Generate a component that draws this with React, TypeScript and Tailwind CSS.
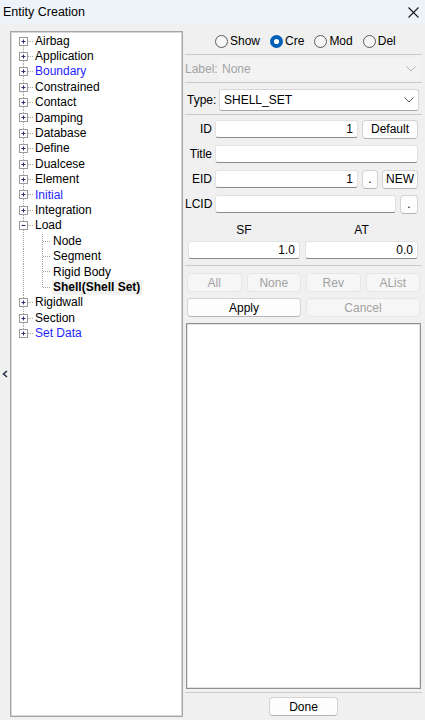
import React from "react";

type Item = {
  label: string;
  level: 0 | 1;
  blue?: boolean;
  expanded?: boolean;
  selected?: boolean;
  first?: boolean;
  last?: boolean;
};

const items: Item[] = [
  { label: "Airbag", level: 0, first: true },
  { label: "Application", level: 0 },
  { label: "Boundary", level: 0, blue: true },
  { label: "Constrained", level: 0 },
  { label: "Contact", level: 0 },
  { label: "Damping", level: 0 },
  { label: "Database", level: 0 },
  { label: "Define", level: 0 },
  { label: "Dualcese", level: 0 },
  { label: "Element", level: 0 },
  { label: "Initial", level: 0, blue: true },
  { label: "Integration", level: 0 },
  { label: "Load", level: 0, expanded: true },
  { label: "Node", level: 1, first: true },
  { label: "Segment", level: 1 },
  { label: "Rigid Body", level: 1 },
  { label: "Shell(Shell Set)", level: 1, selected: true, last: true },
  { label: "Rigidwall", level: 0 },
  { label: "Section", level: 0 },
  { label: "Set Data", level: 0, blue: true, last: true },
];

const H = 15.4;
const MID = 7.5;
const DOT = "#a3a3a3";

function RowLines({ it }: { it: Item }) {
  if (it.level === 0) {
    const y1 = it.first ? MID : 0;
    const y2 = it.last ? MID : H;
    return (
      <svg width="24" height={H} viewBox={`0 0 24 ${H}`} className="shrink-0">
        <line x1="12.5" y1={y1} x2="12.5" y2={y2} stroke={DOT} strokeDasharray="1 1" />
        <line x1="17" y1={MID} x2="23" y2={MID} stroke={DOT} strokeDasharray="1 1" />
        <rect x="8.5" y="3.5" width="8" height="8" fill="#fff" stroke="#9b9b9b" />
        <line x1="10.5" y1={MID} x2="14.5" y2={MID} stroke="#2d2d6e" />
        {!it.expanded && <line x1="12.5" y1="5.5" x2="12.5" y2="9.5" stroke="#2d2d6e" />}
      </svg>
    );
  }
  const y2 = it.last ? MID : H;
  return (
    <svg width="42" height={H} viewBox={`0 0 42 ${H}`} className="shrink-0">
      <line x1="12.5" y1="0" x2="12.5" y2={H} stroke={DOT} strokeDasharray="1 1" />
      <line x1="31.5" y1="0" x2="31.5" y2={y2} stroke={DOT} strokeDasharray="1 1" />
      <line x1="32" y1={MID} x2="40" y2={MID} stroke={DOT} strokeDasharray="1 1" />
    </svg>
  );
}

function Chevron({ color }: { color: string }) {
  return (
    <svg width="10" height="6" viewBox="0 0 10 6">
      <polyline points="0.5,0.5 5,5 9.5,0.5" fill="none" stroke={color} strokeWidth="1" />
    </svg>
  );
}

function Radio({ checked, label }: { checked?: boolean; label: string }) {
  return (
    <div className="flex items-center gap-[2px]">
      {checked ? (
        <svg width="13" height="13" viewBox="0 0 13 13">
          <circle cx="6.5" cy="6.5" r="6.5" fill="#005fb8" />
          <circle cx="6.5" cy="6.5" r="2.6" fill="#fff" />
        </svg>
      ) : (
        <svg width="13" height="13" viewBox="0 0 13 13">
          <circle cx="6.5" cy="6.5" r="6" fill="#f7f7f7" stroke="#5a5a5a" strokeWidth="1" />
        </svg>
      )}
      <span>{label}</span>
    </div>
  );
}

function Input({ value, w }: { value?: string; w: string }) {
  return (
    <div
      className={`${w} h-[18px] bg-white border border-[#e2e2e2] border-b-[#8a8a8a] rounded-[3px] flex items-center justify-end pr-[4px] text-[12px] text-black`}
    >
      {value}
    </div>
  );
}

function Btn({ label, w, disabled }: { label: string; w?: string; disabled?: boolean }) {
  return (
    <div
      className={`${w ?? ""} h-[19px] rounded-[4px] border flex items-center justify-center text-[12px] ${
        disabled
          ? "bg-[#f6f6f6] border-[#e6e6e6] text-[#a2a2a2]"
          : "bg-[#fdfdfd] border-[#d3d3d3] border-b-[#b5b5b5] text-black"
      }`}
    >
      {label}
    </div>
  );
}

function Sep() {
  return <div className="h-px w-full bg-[#c9c9c9] shrink-0" />;
}

export default function App() {
  return (
    <div className="w-[425px] h-[720px] bg-[#f0f0f0] overflow-hidden font-['Liberation_Sans',Arial,sans-serif] text-[12px] text-black">
      {/* Title bar */}
      <div className="h-[24px] bg-[#eef3f9] flex items-center justify-between pl-[3px] pr-[6px]">
        <span className="text-[12.5px] leading-none">Entity Creation</span>
        <svg width="11" height="11" viewBox="0 0 11 11">
          <line x1="0.5" y1="0.5" x2="10.5" y2="10.5" stroke="#1a1a1a" strokeWidth="1.1" />
          <line x1="10.5" y1="0.5" x2="0.5" y2="10.5" stroke="#1a1a1a" strokeWidth="1.1" />
        </svg>
      </div>

      <div className="flex h-[696px]">
        {/* collapse arrow strip */}
        <div className="w-[10px] flex items-center justify-center pt-[4px]">
          <svg width="6" height="8" viewBox="0 0 6 8">
            <polyline points="5,1 1.5,4 5,7" fill="none" stroke="#2a2f4a" strokeWidth="1.6" />
          </svg>
        </div>

        {/* Tree */}
        <div className="mt-[7px] w-[173px] h-[686px] bg-white border border-[#a3a5ab] shadow-[inset_0_0_0_1px_#d6d7da] pt-[1.5px]">
          {items.map((it, i) => (
            <div key={i} className="flex items-center" style={{ height: H }}>
              <RowLines it={it} />
              <span
                className={`leading-[15px] whitespace-nowrap ${
                  it.blue ? "text-[#1f1fff]" : "text-black"
                } ${it.selected ? "font-bold bg-[#f1f1f1] -ml-[1px] pl-[1px] pr-[2px]" : ""}`}
              >
                {it.label}
              </span>
            </div>
          ))}
        </div>

        {/* Right panel */}
        <div className="ml-[2px] w-[237px] flex flex-col">
          {/* radios */}
          <div className="h-[30px] pt-[8px] shrink-0">
            <div className="h-[18px] flex items-center gap-[10px] pl-[30px]">
              <Radio label="Show" />
              <Radio checked label="Cre" />
              <Radio label="Mod" />
              <Radio label="Del" />
            </div>
          </div>
          <Sep />
          {/* Label */}
          <div className="h-[27px] flex items-center shrink-0">
            <span className="w-[34px] text-[#a3a3a3]">Label:</span>
            <div className="w-[201px] h-[22px] flex items-center justify-between pl-[3px] pr-[4px] bg-[#f3f3f3] rounded-[3px]">
              <span className="text-[#a3a3a3]">None</span>
              <Chevron color="#b5b5b5" />
            </div>
          </div>
          <Sep />
          {/* Type */}
          <div className="h-[31px] pt-[6px] flex items-start shrink-0">
            <span className="w-[34px] pl-[2px] h-[22px] flex items-center">Type:</span>
            <div className="w-[200px] h-[22px] flex items-center justify-between pl-[4px] pr-[4px] bg-white border border-[#d6d6d6] border-b-[#a9a9a9] rounded-[3px]">
              <span>SHELL_SET</span>
              <Chevron color="#606060" />
            </div>
          </div>
          <Sep />

          {/* fields */}
          <div className="flex flex-col gap-[7px] mt-[5px] pr-[4px] shrink-0">
            <div className="flex items-center h-[18px]">
              <span className="w-[27px] text-right">ID</span>
              <div className="ml-[3px]">
                <Input w="w-[143px]" value="1" />
              </div>
              <div className="ml-[4px]">
                <Btn label="Default" w="w-[56px]" />
              </div>
            </div>
            <div className="flex items-center h-[18px]">
              <span className="w-[27px] text-right">Title</span>
              <div className="ml-[3px]">
                <Input w="w-[203px]" />
              </div>
            </div>
            <div className="flex items-center h-[18px]">
              <span className="w-[27px] text-right">EID</span>
              <div className="ml-[3px]">
                <Input w="w-[143px]" value="1" />
              </div>
              <div className="ml-[4px]">
                <Btn label="." w="w-[16px]" />
              </div>
              <div className="ml-[4px]">
                <Btn label="NEW" w="w-[36px]" />
              </div>
            </div>
            <div className="flex items-center h-[18px]">
              <span className="w-[27px] text-right">LCID</span>
              <div className="ml-[3px]">
                <Input w="w-[181px]" />
              </div>
              <div className="ml-[4px]">
                <Btn label="." w="w-[18px]" />
              </div>
            </div>
          </div>

          {/* SF / AT */}
          <div className="mt-[7px] h-[20px] flex items-center pl-[3px] pr-[4px] gap-[5px] shrink-0">
            <span className="w-[112px] text-center">SF</span>
            <span className="w-[113px] text-center">AT</span>
          </div>
          <div className="mt-px flex pl-[3px] pr-[4px] gap-[5px] shrink-0">
            <Input w="w-[112px]" value="1.0" />
            <Input w="w-[113px]" value="0.0" />
          </div>
          <div className="mt-[6px]">
            <Sep />
          </div>

          {/* buttons */}
          <div className="mt-[7px] grid grid-cols-4 gap-[5px] pl-[2px] pr-[2px] shrink-0">
            <Btn label="All" disabled />
            <Btn label="None" disabled />
            <Btn label="Rev" disabled />
            <Btn label="AList" disabled />
          </div>
          <div className="mt-[6px] grid grid-cols-2 gap-[5px] pl-[2px] pr-[2px] shrink-0">
            <Btn label="Apply" />
            <Btn label="Cancel" disabled />
          </div>

          {/* list box */}
          <div className="mt-[6px] ml-px mr-px h-[366px] bg-white border border-[#8f9095] shadow-[inset_0_0_0_1px_#e4e4e4] shrink-0" />

          <div className="mt-[3px]">
            <Sep />
          </div>
          <div className="mt-[4px] flex justify-center shrink-0">
            <Btn label="Done" w="w-[69px]" />
          </div>
        </div>
      </div>
    </div>
  );
}
